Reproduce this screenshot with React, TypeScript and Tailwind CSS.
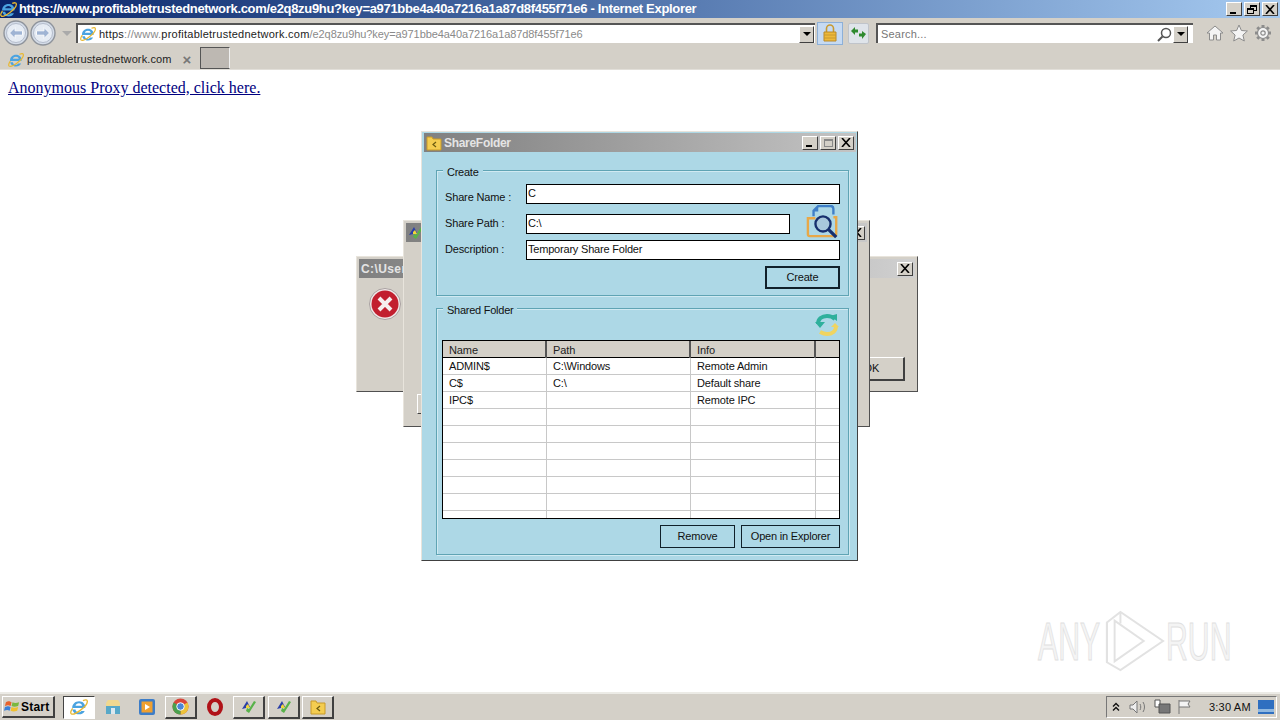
import type { ReactNode } from "react";

const bevel = "border border-t-white border-l-white border-b-[#404040] border-r-[#404040]";
const ui = "font-['Liberation_Sans',Arial,sans-serif]";

function IeIcon({ size = 16 }: { size?: number }) {
  return (
    <svg width={size} height={size} viewBox="0 0 16 16" className="shrink-0">
      <g transform="translate(-1.800 -1.800) scale(1.220)">
        <path d="M3.200 8.800h9.400c.3-3-1.700-5-4.500-5-2.900 0-5 2.100-5 4.900 0 2.900 2.100 4.700 4.900 4.700 2 0 3.500-.9 4.200-2.500h-2.500c-.4.700-1 1-1.800 1-1.200 0-2.300-.8-2.400-2.100h-2.300zM5.500 7.100c.2-1.100 1.200-1.800 2.500-1.800s2.100.7 2.300 1.800z" fill="#4aa3e0" fillRule="evenodd" />
      </g>
      <path d="M11.500 2.300c2.400-1 3.800-.9 3.900.6.100 1.900-2.700 5.400-6.300 8.100-3.500 2.600-6.800 3.900-8 3-.9-.8-.3-2.600 1.200-4.800" fill="none" stroke="#e8b832" strokeWidth="1.200" />
    </svg>
  );
}

function NavCircle({ flip }: { flip?: boolean }) {
  return (
    <svg width="26" height="26" viewBox="0 0 26 26" className={flip ? "-scale-x-100" : ""}>
      <circle cx="13" cy="13" r="12" fill="#d4dce8" stroke="#8f949c" strokeWidth="1.400" />
      <circle cx="13" cy="13" r="9.500" fill="#e6ecf4" stroke="#b4bccb" />
      <path d="M6.500 13l5.500-5.500v3.300h7.500v4.400H12v3.300z" fill="#9fb4d4" stroke="#f8f9fb" strokeWidth="1" />
    </svg>
  );
}

function Chevron() {
  return <span className={`${bevel} w-[15px] h-[17px] flex items-center justify-center bg-[#d4d0c8] shrink-0`}>
    <span className="w-0 h-0 border-x-[4px] border-x-transparent border-t-[4px] border-t-black" />
  </span>;
}

function CaptionBtn({ children, className = "" }: { children?: ReactNode; className?: string }) {
  return <span className={`${bevel} w-[16px] h-[14px] bg-[#d4d0c8] flex items-center justify-center relative text-black ${className}`}>{children}</span>;
}

function CloseGlyph() {
  return <svg width="10" height="9" viewBox="0 0 10 9"><path d="M1 0l8 9M9 0l-8 9" fill="none" stroke="#000" strokeWidth="1.600" /></svg>;
}

function MinGlyph() {
  return <span className="w-[6px] h-[2px] bg-black mt-[7px] mr-[2px]" />;
}

function FolderShareIcon({ size = 16 }: { size?: number }) {
  return (
    <svg width={size} height={size} viewBox="0 0 16 16" className="shrink-0">
      <path d="M1 2h5l1 2h8v11H1z" fill="#f4cd50" stroke="#c89a28" />
      <path d="M10 7l-3 2.500 3 2.500" fill="none" stroke="#6a5a10" strokeWidth="1.200" />
    </svg>
  );
}

function AppIcon({ size = 16 }: { size?: number }) {
  return (
    <svg width={size} height={size} viewBox="0 0 16 16" className="shrink-0">
      <path d="M1 10l5-8 3 6z" fill="#2a3fa8" />
      <path d="M5 7l2-2 2 4H5z" fill="#f2d63a" />
      <path d="M5 12l3 2 7-11-2-1-5 8-2-1z" fill="#58b24a" />
    </svg>
  );
}

function LensFolderIcon() {
  return (
    <svg width="34" height="34" viewBox="0 0 36 36">
      <path d="M8 12V6l5-5h13c2 0 3 1 3 3v6" fill="none" stroke="#3f7fc8" strokeWidth="2.500" />
      <path d="M8 7h5V2z" fill="#3f7fc8" />
      <path d="M10 14H2v17c0 1 1 2 2 2h26c1 0 2-1 2-2V13h-3" fill="none" stroke="#e8a848" strokeWidth="2.500" />
      <circle cx="18" cy="20" r="8" fill="#a8c8dc" stroke="#17306e" strokeWidth="2.500" />
      <path d="M24 26l8 8" stroke="#17306e" strokeWidth="3.500" />
    </svg>
  );
}

function RefreshIcon() {
  return (
    <svg width="26" height="26" viewBox="0 0 26 26">
      <path d="M4 12c0-5 4-8 9-8 3 0 6 1 8 3" fill="none" stroke="#2eb09c" strokeWidth="4" />
      <path d="M1 10h10l-5 6zM16 4l7-2v7z" fill="#2eb09c" />
      <path d="M22 14c0 5-4 8-9 8-3 0-5-1-7-2" fill="none" stroke="#f0d460" strokeWidth="4" />
      <path d="M17 15h8l-4-4z" fill="#f0d460" />
    </svg>
  );
}

function Button({ children, className }: { children: ReactNode; className: string }) {
  return <div className={`flex items-center justify-center border text-[11px] tracking-[-0.2px] text-[#111] whitespace-nowrap ${className}`}>{children}</div>;
}

function GroupBox({ title, className, children }: { title: string; className: string; children: ReactNode }) {
  return (
    <div className={`relative border border-[#5fa4b4] shadow-[inset_1px_1px_0_#d0eaf2,1px_1px_0_#d0eaf2] ${className}`}>
      <span className="absolute left-[6px] top-[-5px] bg-[#add8e6] px-[4px] text-[11px] tracking-[-0.25px] leading-[13px] text-[#111]">{title}</span>
      {children}
    </div>
  );
}

const shares = [
  ["ADMIN$", "C:\\Windows", "Remote Admin"],
  ["C$", "C:\\", "Default share"],
  ["IPC$", "", "Remote IPC"],
  ["", "", ""],
  ["", "", ""],
  ["", "", ""],
  ["", "", ""],
  ["", "", ""],
  ["", "", ""],
  ["", "", ""],
];

function SharesTable() {
  const head = ["Name", "Path", "Info", ""];
  const cols = "grid grid-cols-[104px_144px_125px_22px]";
  return (
    <div className="h-[179px] border-[1.5px] border-black bg-white overflow-hidden">
      <div className={`${cols} h-[17px] bg-[#d4d0c8] border-b border-black`}>
        {head.map((h, i) => (
          <div key={i} className="border-r-2 border-r-[#555] last:border-r-0 pl-[6px] pt-[2px] text-[11px] tracking-[-0.1px] leading-[15px] text-[#222]">{h}</div>
        ))}
      </div>
      {shares.map((row, i) => (
        <div key={i} className={`${cols} h-[17px] border-b border-[#c8c8c8]`}>
          {[...row, ""].map((c, j) => (
            <div key={j} className="border-r border-[#c8c8c8] last:border-r-0 pl-[6px] pt-px text-[11px] tracking-[-0.15px] leading-[15px] text-[#111]">{c}</div>
          ))}
        </div>
      ))}
    </div>
  );
}

function ShareFolderWindow() {
  const input = "h-[20px] border border-black bg-white pl-px text-[11px] tracking-[-0.2px] leading-[16px] text-[#111]";
  const label = "w-[65px] text-[11px] tracking-[-0.15px] text-[#111] whitespace-nowrap";
  return (
    <div className="absolute left-[421px] top-[131px] w-[437px] h-[430px] flex flex-col pl-[2px] pt-[1px] pr-px pb-[2px] bg-[#add8e6] border border-t-[#e8e4dc] border-l-[#e8e4dc] border-b-[#404040] border-r-[#404040]">
      <div className="h-[19px] shrink-0 flex items-center bg-gradient-to-r from-[#808080] to-[#c4c4c4] pl-[2px] pr-[2px]">
        <FolderShareIcon />
        <span className="ml-[2px] text-[12px] tracking-[-0.3px] font-bold text-[#e4e4e4] grow">ShareFolder</span>
        <div className="flex gap-[2px]">
          <CaptionBtn><MinGlyph /></CaptionBtn>
          <CaptionBtn><span className="w-[9px] h-[8px] border border-[#888] border-t-2" /></CaptionBtn>
          <CaptionBtn><CloseGlyph /></CaptionBtn>
        </div>
      </div>
      <div className="flex flex-col pt-[18px] pl-[12px] pr-[7px]">
        <GroupBox title="Create" className="h-[126px] pl-[8px] pr-[8px] pt-[13px]">
          <div className="flex items-center gap-[16px]">
            <span className={`${label} translate-y-[3px]`}>Share Name :</span>
            <div className={`${input} w-[314px]`}>C</div>
          </div>
          <div className="flex items-center gap-[16px] mt-[10px] relative">
            <span className={`${label} -translate-y-px`}>Share Path :</span>
            <div className={`${input} w-[264px]`}>C:\</div>
            <div className="absolute right-0 top-[-9px]"><LensFolderIcon /></div>
          </div>
          <div className="flex items-center gap-[16px] mt-[6px]">
            <span className={`${label} -translate-y-px`}>Description :</span>
            <div className={`${input} w-[314px]`}>Temporary Share Folder</div>
          </div>
          <div className="flex justify-end mt-[6px]">
            <Button className="w-[75px] h-[23px] border-2 border-[#10202a]">Create</Button>
          </div>
        </GroupBox>
        <GroupBox title="Shared Folder" className="mt-[12px] h-[247px] pl-[5px] pr-[8px]">
          <div className="flex justify-end h-[31px] pt-[3px]">
            <RefreshIcon />
          </div>
          <SharesTable />
          <div className="flex justify-end gap-[6px] mt-[6px]">
            <Button className="w-[75px] h-[23px] border-[#10202a]">Remove</Button>
            <Button className="w-[99px] h-[23px] border-[#10202a]">Open in Explorer</Button>
          </div>
        </GroupBox>
      </div>
    </div>
  );
}

function BackWindows() {
  return (
    <>
      <div className="absolute left-[356px] top-[256px] w-[562px] h-[136px] bg-[#d4d0c8] border border-t-[#e8e4dc] border-l-[#e8e4dc] border-b-[#505050] border-r-[#505050]">
        <div className="mt-[2px] mx-[2px] h-[19px] flex items-center justify-between bg-gradient-to-r from-[#808080] to-[#d0d0d0] pl-[2px] pr-[2px]">
          <span className="text-[12px] font-bold tracking-[0.4px] text-[#e4e4e4]">C:\User</span>
          <CaptionBtn><CloseGlyph /></CaptionBtn>
        </div>
        <svg width="32" height="32" viewBox="0 0 32 32" className="absolute left-[12px] top-[31px]">
          <circle cx="16" cy="16" r="15.500" fill="#f0e8e8" stroke="#a8a0a0" />
          <circle cx="16" cy="16" r="13.500" fill="#c21f2f" />
          <path d="M10 10l12 12M22 10L10 22" stroke="#f6eeee" strokeWidth="4" />
        </svg>
        <div className={`${bevel} absolute right-[12px] bottom-[10px] w-[66px] h-[24px] border-b-2 border-r-2 flex items-center justify-center text-[11px] text-[#111]`}>OK</div>
      </div>
      <div className="absolute left-[403px] top-[220px] w-[467px] h-[207px] bg-[#d4d0c8] border border-t-[#e8e4dc] border-l-[#e8e4dc] border-b-[#505050] border-r-[#505050]">
        <div className="mt-[2px] mx-[2px] h-[19px] flex items-center justify-between bg-gradient-to-r from-[#808080] to-[#c8c8c8] pl-[2px] pr-[2px]">
          <AppIcon />
          <CaptionBtn><CloseGlyph /></CaptionBtn>
        </div>
        <div className={`${bevel} absolute left-[13px] bottom-[12px] w-[40px] h-[20px]`} />
      </div>
    </>
  );
}

function Watermark() {
  return (
    <div className="absolute left-[1038px] top-[608px] w-[194px] h-[66px] flex items-center justify-between text-[54px] leading-none text-[#f4f4f4] [-webkit-text-stroke:1px_#e0e0e0]">
      <span className="w-[64px] inline-block origin-left scale-x-[0.56] whitespace-nowrap">ANY</span>
      <svg width="62" height="66" viewBox="0 0 64 66" fill="none" stroke="#e2e2e2" strokeWidth="2">
        <path d="M4 14L18 3l44 30-44 30-14-8zM12 12v42l30-21z" />
        <path d="M18 3v12M4 14v41" />
      </svg>
      <span className="w-[66px] inline-block origin-left scale-x-[0.56] whitespace-nowrap">RUN</span>
    </div>
  );
}

function TitleBar() {
  return (
    <div className="h-[18px] flex items-center bg-gradient-to-r from-[#0a246a] to-[#a6caf0] pr-[2px]">
      <IeIcon size={17} />
      <span className="ml-[2px] grow whitespace-nowrap text-[13px] font-bold text-white tracking-[-0.32px]">
        https://www.profitabletrustednetwork.com/e2q8zu9hu?key=a971bbe4a40a7216a1a87d8f455f71e6 - Internet Explorer
      </span>
      <div className="flex gap-[2px]">
        <CaptionBtn><MinGlyph /></CaptionBtn>
        <CaptionBtn>
          <span className="relative w-[10px] h-[9px]">
            <span className="absolute right-0 top-0 w-[7px] h-[6px] border border-black border-t-2" />
            <span className="absolute left-0 bottom-0 w-[7px] h-[6px] border border-black border-t-2 bg-[#d4d0c8]" />
          </span>
        </CaptionBtn>
        <CaptionBtn><CloseGlyph /></CaptionBtn>
      </div>
    </div>
  );
}

function AddressRow() {
  return (
    <div className="h-[30px] flex items-center pl-[3px]">
      <NavCircle />
      <div className="ml-px"><NavCircle flip /></div>
      <span className="ml-[6px] w-0 h-0 border-x-[5px] border-x-transparent border-t-[5px] border-t-[#aaa]" />
      <div className="ml-[4px] w-[739px] h-[20px] flex items-center bg-white border-t-2 border-l-2 border-t-[#555] border-l-[#555] pl-[2px] pr-px">
        <IeIcon />
        <span className="ml-[3px] grow whitespace-nowrap text-[11px] tracking-[0.25px] text-[#8a8a8a]">
          <span className="text-[#222]">https</span>://www.<span className="text-[#222]">profitabletrustednetwork.com</span><span className="tracking-[-0.08px]">/e2q8zu9hu?key=a971bbe4a40a7216a1a87d8f455f71e6</span>
        </span>
        <Chevron />
      </div>
      <div className="ml-[2px] w-[26px] h-[23px] flex items-center justify-center bg-[#c6daf2] border border-[#8db0d8]">
        <svg width="14" height="18" viewBox="0 0 14 18">
          <path d="M3.500 8V4.500a3.500 3.500 0 017 0V8" fill="none" stroke="#c89a30" strokeWidth="1.600" />
          <path d="M1 8h12v9H1z" fill="#eeb93a" stroke="#b8892a" />
          <path d="M1 11h12M1 14h12" stroke="#c89a30" />
        </svg>
      </div>
      <div className="ml-[5px] w-[21px] h-[21px] flex items-center justify-center bg-[#dfe4ea] border border-[#c0c4ca] rounded-[2px]">
        <svg width="15" height="12" viewBox="0 0 15 12" fill="#2f8a2f">
          <path d="M0 4l4-4v2.500h3v3H4V8zM15 7l-4 5V9.500H8v-3h3V4z" />
        </svg>
      </div>
      <div className="ml-[7px] w-[317px] h-[20px] flex items-center bg-white border-t-2 border-l-2 border-t-[#555] border-l-[#555] pl-[3px] pr-[5px]">
        <span className="grow text-[11px] tracking-[0.2px] text-[#777]">Search...</span>
        <svg width="15" height="15" viewBox="0 0 15 15" fill="none" stroke="#555" className="mr-px">
          <circle cx="9" cy="6" r="4.500" strokeWidth="1.500" />
          <path d="M5.500 9.500L1 14" strokeWidth="2" />
        </svg>
        <Chevron />
      </div>
      <div className="ml-[13px] flex items-center gap-[6px]">
        <svg width="18" height="18" viewBox="0 0 18 18" fill="#f4f4f4" stroke="#8c8c8c">
          <path d="M1 9l8-7 8 7h-2.500v7h-4v-5h-3v5h-4V9z" />
        </svg>
        <svg width="18" height="18" viewBox="0 0 18 18" fill="#f4f4f4" stroke="#8c8c8c">
          <path d="M9 1l2.400 5.500 6 .5-4.500 4 1.400 6L9 14l-5.300 3 1.400-6L.6 7l6-.5z" />
        </svg>
        <svg width="18" height="18" viewBox="0 0 18 18" fill="#f4f4f4" stroke="#8c8c8c" strokeWidth="1.200">
          <path d="M9 1v3M9 14v3M1 9h3M14 9h3M3.300 3.300l2.200 2.200M12.500 12.500l2.200 2.200M14.700 3.300l-2.200 2.200M5.500 12.500l-2.200 2.200" strokeWidth="3" />
          <circle cx="9" cy="9" r="5.500" />
          <circle cx="9" cy="9" r="2.200" />
        </svg>
      </div>
    </div>
  );
}

function TabRow() {
  return (
    <div className="h-[22px] flex items-end pl-[8px] border-b border-[#e2dfd9]">
      <div className="h-[21px] flex items-center pt-[2px]">
        <IeIcon />
        <span className="ml-[3px] w-[155px] text-[11px] text-[#222] tracking-[0.12px] whitespace-nowrap">profitabletrustednetwork.com</span>
        <span className="w-[10px] text-center text-[15px] leading-none text-[#777] font-bold">×</span>
      </div>
      <div className="ml-[8px] w-[30px] h-[22px] bg-[#bdb8b2] border border-t-[#555] border-l-[#555] border-r-[#f0f0f0] border-b-[#555]" />
    </div>
  );
}

function TaskBtn({ children }: { children: ReactNode }) {
  return <div className={`${bevel} w-[32px] h-[23px] flex items-center justify-center bg-[#d4d0c8] border-b-2 border-r-2`}>{children}</div>;
}

function Taskbar() {
  return (
    <div className="absolute left-0 right-0 bottom-0 h-[28px] flex items-center bg-[#d4d0c8] border-t-2 border-t-[#ecebe6] pl-[2px] pr-[3px]">
      <div className={`${bevel} w-[53px] h-[22px] flex items-center pl-[1px] border-b-2 border-r-2`}>
        <svg width="17" height="16" viewBox="0 0 18 16" className="shrink-0">
          <path d="M2 3c3-2 4-1 6 0L7 7C5 6 4 6 1 7z" fill="#e8622c" />
          <path d="M9 3c2 1 4 1 7 0l-1 4c-3 1-5 1-7 0z" fill="#7ab840" />
          <path d="M1 8c3-1 4-1 6 0l-1 4c-2-1-3-1-6 0z" fill="#3c80d8" />
          <path d="M8 8c2 1 4 1 7 0l-1 4c-3 1-5 1-7 0z" fill="#f0c030" />
        </svg>
        <span className="text-[12px] tracking-[0.2px] font-bold text-black">Start</span>
      </div>
      <div className="ml-[8px] w-[32px] h-[23px] flex items-center justify-center bg-white border border-t-[#444] border-l-[#444] border-b-white border-r-white">
        <IeIcon size={18} />
      </div>
      <div className="ml-[1px] w-[34px] flex justify-center">
        <svg width="16" height="18" viewBox="0 0 16 18">
          <path d="M1 5l2-3h10l2 3v3H1z" fill="#f0d890" />
          <path d="M1 8h14v8H1z" fill="#58a8c8" />
          <path d="M6 10h4v6H6z" fill="#dce8ee" />
        </svg>
      </div>
      <div className="w-[33px] flex justify-center">
        <svg width="18" height="18" viewBox="0 0 18 18">
          <rect x="1" y="1" width="16" height="16" rx="2" fill="#3d7dc8" />
          <rect x="3.500" y="3.500" width="11" height="11" fill="#f0a030" />
          <path d="M7 6l5 3-5 3z" fill="#fff" />
        </svg>
      </div>
      <div className="ml-[2px]">
        <TaskBtn>
          <svg width="17" height="17" viewBox="0 0 18 18">
            <circle cx="9" cy="9" r="8.500" fill="#d8453a" />
            <path d="M9 9L16.400 4.800A8.500 8.500 0 019 17.500z" fill="#edc33a" />
            <path d="M9 9L9 17.500A8.500 8.500 0 011.600 4.800z" fill="#4aa04e" />
            <circle cx="9" cy="9" r="4" fill="#4a86d8" stroke="#fff" />
          </svg>
        </TaskBtn>
      </div>
      <div className="w-[35px] flex justify-center">
        <svg width="16" height="18" viewBox="0 0 16 18">
          <ellipse cx="8" cy="9" rx="6" ry="7" fill="none" stroke="#b01218" strokeWidth="4" />
        </svg>
      </div>
      <div className="ml-px"><TaskBtn><AppIcon /></TaskBtn></div>
      <div className="ml-[3px]"><TaskBtn><AppIcon /></TaskBtn></div>
      <div className="ml-[2px]"><TaskBtn><FolderShareIcon /></TaskBtn></div>
      <div className="ml-auto w-[171px] h-[22px] flex items-center border border-t-[#777] border-l-[#777] border-b-white border-r-white pl-[5px] pr-[2px]">
        <svg width="8" height="10" viewBox="0 0 8 10" fill="none" stroke="#111" strokeWidth="1.400">
          <path d="M1 4.500L4 1.500l3 3M1 8.500l3-3 3 3" />
        </svg>
        <svg width="18" height="16" viewBox="0 0 18 16" fill="#eee" stroke="#777" className="ml-[9px]">
          <path d="M1 6h3l4-4v12l-4-4H1z" />
          <path d="M11 5c1 2 1 4 0 6M14 3c2 3 2 7 0 10" fill="none" />
        </svg>
        <svg width="18" height="16" viewBox="0 0 18 16" className="ml-[6px]">
          <path d="M2 1h5v7H2z" fill="#fff" stroke="#555" />
          <path d="M6 5h11v9H6z" fill="#777" stroke="#555" />
        </svg>
        <svg width="16" height="16" viewBox="0 0 16 16" fill="#f4f4f4" stroke="#777" className="ml-[6px]">
          <path d="M2 1v14M2 2h11l-2 3 2 3H2" />
        </svg>
        <span className="ml-[16px] text-[11px] tracking-[0.2px] text-[#111] whitespace-nowrap">3:30 AM</span>
        <svg width="16" height="14" viewBox="0 0 16 14" className="ml-auto">
          <rect width="16" height="14" fill="#2f6fc0" />
          <rect y="9" width="16" height="3" fill="#90b8e0" />
        </svg>
      </div>
    </div>
  );
}

export default function App() {
  return (
    <div className={`${ui} relative w-[1280px] h-[720px] overflow-hidden bg-white`}>
      <div className="bg-[#d4d0c8]">
        <TitleBar />
        <AddressRow />
        <TabRow />
      </div>
      <a className="block ml-[8px] mt-[9px] w-fit font-['Liberation_Serif',serif] text-[16px] leading-[18px] text-[#000080] underline">Anonymous Proxy detected, click here.</a>
      <BackWindows />
      <ShareFolderWindow />
      <Watermark />
      <Taskbar />
    </div>
  );
}
